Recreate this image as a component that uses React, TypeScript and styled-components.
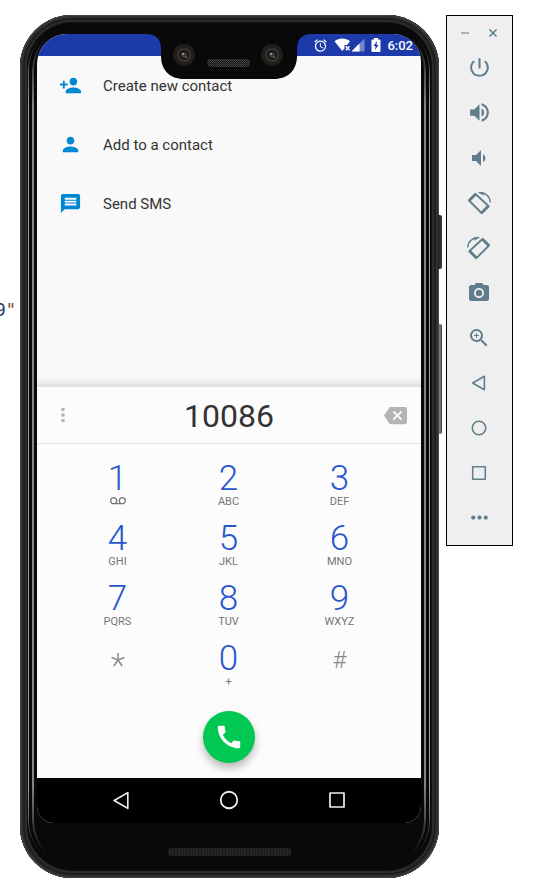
import React, { useState } from "react";
import styled, { createGlobalStyle } from "styled-components";
import {
  MdAlarm,
  MdBackspace,
  MdCall,
  MdMessage,
  MdMoreHoriz,
  MdMoreVert,
  MdPerson,
  MdPersonAdd,
  MdPhotoCamera,
  MdPowerSettingsNew,
  MdVoicemail,
  MdVolumeDown,
  MdVolumeUp,
  MdZoomIn,
} from "react-icons/md";

const GlobalStyle = createGlobalStyle`
  *, *::before, *::after { box-sizing: border-box; }
  body { margin: 0; background: #fff; font-family: Roboto, sans-serif; }
  button { padding: 0; border: 0; background: none; font: inherit; color: inherit; cursor: pointer; }
  svg { display: block; flex: none; }
`;

const Desktop = styled.div`
  display: flex;
  min-height: 100vh;
  padding: 15px 21px 11px 0;
`;

const EditorSliver = styled.aside`
  display: flex;
  justify-content: flex-end;
  flex: none;
  width: 20px;
  padding: 285px 4px 0 0;
  overflow: hidden;
  color: #1d3a5f;
  font: 17px/20px "DejaVu Sans Mono", monospace;
`;

const Quote = styled.span`
  color: #7c4434;
`;

const PhoneCase = styled.main`
  position: relative;
  display: flex;
  flex: 1;
  flex-direction: column;
  min-width: 0;
  margin-right: 7px;
  padding: 19px 18px 0 17px;
  border-radius: 52px;
  background: #090909;
  box-shadow: inset 0 0 0 1px #414443, inset 0 0 0 3px #2d3130,
    inset 0 0 0 5px #1d1f1f, inset 0 0 0 7px #2b2b2b, inset 0 0 0 8px #111;

  &::before,
  &::after {
    content: "";
    position: absolute;
    pointer-events: none;
    border: 0 solid;
    mask-image: linear-gradient(transparent 8px, #000 80px, #000 calc(100% - 80px), transparent calc(100% - 8px));
  }
  &::before {
    inset: 9px 9px 11px 8px;
    border-color: #a0a0a0;
    border-width: 0 1px;
    border-radius: 46px;
  }
  &::after {
    inset: 11px 13px 13px 12px;
    border-color: #858585;
    border-width: 0 2px;
    border-radius: 44px;
  }
`;

const SideKey = styled.span<{ $top: number; $height: number; $shine?: boolean }>`
  position: absolute;
  right: -3px;
  top: ${(p) => p.$top}px;
  width: 4px;
  height: ${(p) => p.$height}px;
  border-radius: 0 2px 2px 0;
  background: ${(p) =>
    p.$shine
      ? "linear-gradient(90deg, #333, #8a8a8a 50%, #333)"
      : "linear-gradient(90deg, #222, #3b3b3b)"};
`;

const Screen = styled.section`
  position: relative;
  display: flex;
  flex: 1;
  flex-direction: column;
  border-radius: 30px 28px 17px 17px;
  background: #f9f9f9;
  overflow: hidden;
`;

const StatusBar = styled.header`
  display: flex;
  align-items: center;
  justify-content: flex-end;
  height: 22px;
  padding-right: 8px;
  background: #1d3aaa;
  color: #fff;
  font-size: 13px;
  font-weight: 500;
`;

const StatusIcons = styled.div`
  display: flex;
  align-items: center;
  margin-right: 6px;
`;

const StatusGap = styled.span`
  width: 6px;
`;

const NotchOverlay = styled.div`
  position: absolute;
  top: 0;
  left: 0;
  right: 0;
  display: flex;
  justify-content: center;
  pointer-events: none;
`;

const ActionList = styled.nav`
  display: flex;
  flex: 1;
  flex-direction: column;
  min-height: 200px;
  background: linear-gradient(transparent calc(100% - 9px), #dfdfdf);
`;

const Action = styled.button`
  display: flex;
  align-items: center;
  gap: 21px;
  height: 59px;
  padding-left: 22px;
  color: #333;
  font-size: 15px;
  line-height: 20px;
  text-align: left;

  svg {
    color: #0288d1;
  }
`;

const Dialer = styled.div`
  background: #fcfcfc;
`;

const NumberRow = styled.div`
  display: flex;
  align-items: center;
  height: 57px;
  padding: 0 14px;
  border-bottom: 1px solid #e0e0e0;
  color: #b4b4b4;
`;

const NumberInput = styled.input`
  flex: 1;
  min-width: 0;
  height: 40px;
  padding: 2px 0 0;
  border: 0;
  outline: 0;
  background: none;
  color: #333;
  font: 32px/38px Roboto, sans-serif;
  text-align: center;
`;

const Keypad = styled.div`
  display: grid;
  grid-template-columns: repeat(3, 1fr);
  padding: 18px 26px 0 25px;
`;

const Key = styled.button`
  display: flex;
  flex-direction: column;
  align-items: center;
  height: 60px;
`;

const Digit = styled.span`
  color: #2956cc;
  font-size: 35px;
  font-weight: 300;
  line-height: 34px;
`;

const Letters = styled.span`
  display: flex;
  align-items: center;
  height: 10px;
  color: #757575;
  font-size: 11px;
`;

const Symbol = styled.span`
  color: #8a8a8a;
  font-size: 24px;
  font-weight: 300;
  line-height: 36px;
`;

const CallRow = styled.div`
  display: flex;
  justify-content: center;
  padding: 9px 0 15px;
`;

const CallButton = styled.button`
  display: flex;
  align-items: center;
  justify-content: center;
  width: 52px;
  height: 52px;
  border-radius: 50%;
  background: #00c853;
  color: #fff;
  box-shadow: 0 5px 8px rgba(0, 0, 0, 0.28);
`;

const SystemNav = styled.nav`
  display: flex;
  justify-content: center;
  height: 45px;
  padding-bottom: 1px;
  background: #000;
  color: #eee;
`;

const SystemButton = styled.button`
  display: flex;
  align-items: center;
  justify-content: center;
  width: 108px;
`;

const Chin = styled.div`
  display: flex;
  justify-content: center;
  height: 55px;
  padding-top: 25px;
`;

const Speaker = styled.span`
  width: 123px;
  height: 8px;
  border-radius: 3px;
  background: repeating-linear-gradient(90deg, #1a1a1a 0 1px, #252525 1px 3px);
`;

const Toolbar = styled.aside`
  flex: none;
  align-self: flex-start;
  width: 67px;
  padding-bottom: 5px;
  border: 1px solid #000;
  background: #efefef;
  color: #607d8b;
`;

const WindowBar = styled.div`
  display: flex;
  align-items: center;
  justify-content: space-between;
  height: 29px;
  padding: 5px 14px 0 13px;
`;

const ToolButton = styled.button`
  display: flex;
  align-items: center;
  justify-content: center;
  width: 100%;
  height: 45px;
  padding-right: 1px;
`;

const IconButton = styled.button`
  display: flex;
  align-items: center;
  justify-content: center;
  width: 24px;
  height: 40px;
`;

const BackIcon = ({ size, stroke }: { size: number; stroke: number }) => (
  <svg width={size} height={size} viewBox="0 0 20 20" fill="none" stroke="currentColor" strokeWidth={stroke} strokeLinejoin="round">
    <path d="M16 2.500v15L3 10z" />
  </svg>
);

const HomeIcon = ({ size, stroke }: { size: number; stroke: number }) => (
  <svg width={size} height={size} viewBox="0 0 20 20" fill="none" stroke="currentColor" strokeWidth={stroke}>
    <circle cx="10" cy="10" r="7.500" />
  </svg>
);

const OverviewIcon = ({ size, stroke }: { size: number; stroke: number }) => (
  <svg width={size} height={size} viewBox="0 0 20 20" fill="none" stroke="currentColor" strokeWidth={stroke} strokeLinejoin="round">
    <rect x="3" y="3" width="14" height="14" />
  </svg>
);

const RotateLeftIcon = () => (
  <svg width="24" height="24" viewBox="0 0 24 24" fill="none" stroke="currentColor">
    <path d="M8.500 3L21.500 15L14.500 22L2 9.500z" strokeWidth="1.800" strokeLinejoin="round" />
    <path d="M8 3.800L2.800 9M21 15.500l-6 6" strokeWidth="2.800" strokeLinecap="round" />
    <path d="M12 1.500C18.500 1.500 23.200 5.500 23.200 11.500" strokeWidth="1.400" />
    <path d="M11 1h5.500v3.800z" fill="currentColor" stroke="none" />
  </svg>
);

const RotateRightIcon = () => (
  <svg width="24" height="24" viewBox="0 0 24 24" fill="none" stroke="currentColor">
    <path d="M15.500 3L2.500 15L9.500 22L22 9.500z" strokeWidth="1.800" strokeLinejoin="round" />
    <path d="M16 3.800L21.200 9M3 15.500l6 6" strokeWidth="2.800" strokeLinecap="round" />
    <path d="M12 1.500C5.500 1.500.8 5.500.8 11.500" strokeWidth="1.400" />
    <path d="M13 1H7.500v3.800z" fill="currentColor" stroke="none" />
  </svg>
);

const WifiOffIcon = () => (
  <svg width="17" height="16" viewBox="0 0 17 16" fill="#fff">
    <path d="M.5 4.200C4.800.5 11.700.5 16 4.200L13.200 8H10.500v3.500L8.300 14z" />
    <path d="M11.700 9.300l3.800 4M15.500 9.300l-3.800 4" stroke="#fff" strokeWidth="1.400" />
  </svg>
);

const SignalIcon = () => (
  <svg width="14" height="14" viewBox="0 0 14 14">
    <path d="M13.500.5v13H.5z" fill="#7286cb" />
    <path d="M8.500 5.500v8H.5z" fill="#fff" />
  </svg>
);

const BatteryIcon = () => (
  <svg width="10" height="14" viewBox="0 0 10 14">
    <path d="M3 0h4v1.500h1.500q1 0 1 1V13q0 1-1 1h-7q-1 0-1-1V2.500q0-1 1-1H3z" fill="#fff" />
    <path d="M6 3L2.500 8h2l-.5 4L7.500 7h-2z" fill="#1d3aaa" />
  </svg>
);

const Camera = ({ cx }: { cx: number }) => (
  <g>
    <circle cx={cx} cy="21" r="11" fill="#211d19" />
    <circle cx={cx} cy="21" r="7" fill="#3b3633" />
    <circle cx={cx} cy="21" r="5" fill="#171717" />
    <circle cx={cx} cy="21" r="3" fill="#3a3a3c" />
    <circle cx={cx - 1} cy="20" r="1" fill="#aaa" />
    <circle cx={cx + 2} cy="23" r="1" fill="#66605a" />
  </g>
);

const Notch = () => (
  <svg width="166" height="46" viewBox="0 0 166 46">
    <defs>
      <pattern id="mesh" width="2" height="2" patternUnits="userSpaceOnUse">
        <rect width="2" height="2" fill="#171717" />
        <rect width="1" height="1" fill="#4a4a4a" />
        <rect x="1" y="1" width="1" height="1" fill="#3a3a3a" />
      </pattern>
    </defs>
    <path d="M0 0C10 0 15 5 15 15V22C15 36 24 45 38 45H128C142 45 151 36 151 22V15C151 5 156 0 166 0z" fill="#090909" />
    <Camera cx={38} />
    <Camera cx={126} />
    <rect x="61" y="25" width="43" height="8" rx="4" fill="url(#mesh)" />
  </svg>
);

const keys = [
  ["1", "voicemail"],
  ["2", "ABC"],
  ["3", "DEF"],
  ["4", "GHI"],
  ["5", "JKL"],
  ["6", "MNO"],
  ["7", "PQRS"],
  ["8", "TUV"],
  ["9", "WXYZ"],
  ["*", ""],
  ["0", "+"],
  ["#", ""],
];

const AsteriskIcon = () => (
  <svg width="16" height="36" viewBox="0 4 16 36" fill="none" stroke="#8a8a8a" strokeWidth="1.500">
    <path d="M8 15v7M1.500 19.500L8 22l6.500-2.500M3.800 28L8 22l4.200 6" />
  </svg>
);

const tools = [
  { label: "Power", icon: <MdPowerSettingsNew size={25} /> },
  { label: "Volume up", icon: <MdVolumeUp size={25} /> },
  { label: "Volume down", icon: <MdVolumeDown size={24} /> },
  { label: "Rotate left", icon: <RotateLeftIcon /> },
  { label: "Rotate right", icon: <RotateRightIcon /> },
  { label: "Take screenshot", icon: <MdPhotoCamera size={24} /> },
  { label: "Zoom", icon: <MdZoomIn size={24} /> },
  { label: "Back", icon: <BackIcon size={18} stroke={1.7} /> },
  { label: "Home", icon: <HomeIcon size={18} stroke={1.7} /> },
  { label: "Overview", icon: <OverviewIcon size={18} stroke={1.7} /> },
  { label: "More", icon: <MdMoreHoriz size={25} /> },
];

export default function App() {
  const [number, setNumber] = useState("10086");

  return (
    <>
      <GlobalStyle />
      <Desktop>
        <EditorSliver>
          9<Quote>"</Quote>
        </EditorSliver>
        <PhoneCase>
          <SideKey $top={200} $height={54} />
          <SideKey $top={309} $height={110} $shine />
          <Screen>
            <StatusBar>
              <StatusIcons>
                <MdAlarm size={15} />
                <StatusGap />
                <WifiOffIcon />
                <SignalIcon />
                <StatusGap />
                <BatteryIcon />
              </StatusIcons>
              <time>6:02</time>
            </StatusBar>
            <ActionList>
              <Action>
                <MdPersonAdd size={23} />
                Create new contact
              </Action>
              <Action>
                <MdPerson size={23} />
                Add to a contact
              </Action>
              <Action>
                <MdMessage size={23} />
                Send SMS
              </Action>
            </ActionList>
            <Dialer>
              <NumberRow>
                <IconButton aria-label="Options">
                  <MdMoreVert size={22} />
                </IconButton>
                <NumberInput
                  aria-label="Phone number"
                  value={number}
                  onChange={(e) => setNumber(e.target.value)}
                />
                <IconButton aria-label="Delete" onClick={() => setNumber(number.slice(0, -1))}>
                  <MdBackspace size={23} />
                </IconButton>
              </NumberRow>
              <Keypad>
                {keys.map(([digit, letters]) => (
                  <Key key={digit} aria-label={digit} onClick={() => setNumber(number + digit)}>
                    {digit === "*" && <AsteriskIcon />}
                    {digit === "#" && <Symbol>#</Symbol>}
                    {letters && <Digit>{digit}</Digit>}
                    {letters && (
                      <Letters>{letters === "voicemail" ? <MdVoicemail size={16} /> : letters}</Letters>
                    )}
                  </Key>
                ))}
              </Keypad>
              <CallRow>
                <CallButton aria-label="Call">
                  <MdCall size={30} />
                </CallButton>
              </CallRow>
            </Dialer>
            <SystemNav>
              <SystemButton aria-label="Back">
                <BackIcon size={21} stroke={1.6} />
              </SystemButton>
              <SystemButton aria-label="Home">
                <HomeIcon size={22} stroke={1.6} />
              </SystemButton>
              <SystemButton aria-label="Overview">
                <OverviewIcon size={20} stroke={1.7} />
              </SystemButton>
            </SystemNav>
            <NotchOverlay>
              <Notch />
            </NotchOverlay>
          </Screen>
          <Chin>
            <Speaker />
          </Chin>
        </PhoneCase>
        <Toolbar>
          <WindowBar>
            <button aria-label="Minimize">
              <svg width="10" height="10" viewBox="0 0 10 10">
                <path d="M1 5h8" stroke="#a4b3ba" strokeWidth="2" />
              </svg>
            </button>
            <button aria-label="Close">
              <svg width="10" height="10" viewBox="0 0 10 10">
                <path d="M1.500 1.500l7 7M8.500 1.500l-7 7" stroke="currentColor" strokeWidth="1.500" />
              </svg>
            </button>
          </WindowBar>
          {tools.map((t) => (
            <ToolButton key={t.label} aria-label={t.label}>
              {t.icon}
            </ToolButton>
          ))}
        </Toolbar>
      </Desktop>
    </>
  );
}
